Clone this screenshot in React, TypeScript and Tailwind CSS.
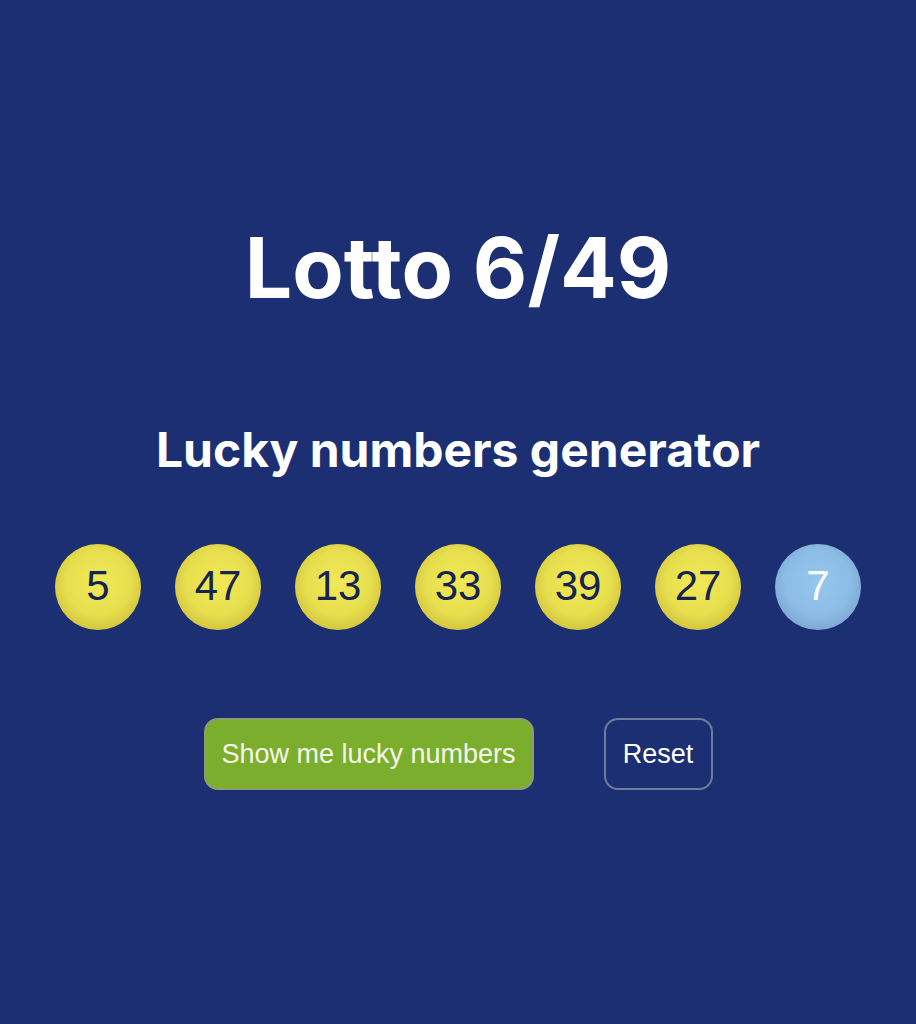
import React from "react";

const nums = [5, 47, 13, 33, 39, 27];

export default function App() {
  return (
    <div className="min-h-[1024px] w-full bg-[#1b2f72] flex flex-col items-center pt-[220px]">
      <h1 className="font-['Inter',sans-serif] font-bold text-white text-[84px] leading-[96px]">
        Lotto 6/49
      </h1>
      <h2 className="mt-[105px] font-['Inter',sans-serif] font-bold text-white text-[48px] leading-[58px]">
        Lucky numbers generator
      </h2>
      <div className="mt-[65px] flex gap-[34px]">
        {nums.map((n) => (
          <div
            key={n}
            className="w-[86px] h-[86px] pb-[4px] rounded-full flex items-center justify-center bg-[radial-gradient(circle_at_50%_45%,#f0e856_0%,#e8df4e_50%,#cfc23e_78%,#8f8430_100%)] text-[#16244f] text-[42px] font-['Liberation_Sans',Arial,sans-serif]"
          >
            {n}
          </div>
        ))}
        <div className="w-[86px] h-[86px] pb-[4px] rounded-full flex items-center justify-center bg-[radial-gradient(circle_at_50%_45%,#95c6ee_0%,#8dbde6_50%,#7ca5cf_78%,#5a779f_100%)] text-white text-[42px] font-['Liberation_Sans',Arial,sans-serif]">
          7
        </div>
      </div>
      <div className="mt-[88px] flex gap-[70px]">
        <button className="w-[330px] h-[72px] rounded-[14px] bg-[#7cae2e] border-2 border-[#8f9c72] text-[#f4f8ea] text-[27px] font-['Liberation_Sans',Arial,sans-serif]">
          Show me lucky numbers
        </button>
        <button className="w-[109px] h-[72px] rounded-[14px] bg-transparent border-2 border-[#6f7b9c] text-white text-[27px] font-['Liberation_Sans',Arial,sans-serif]">
          Reset
        </button>
      </div>
    </div>
  );
}
